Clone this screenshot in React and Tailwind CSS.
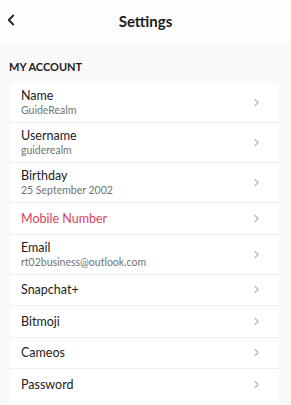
import React from 'react';
import { ChevronLeft, ChevronRight } from 'lucide-react';

const rows = [
  { label: 'Name', sub: 'GuideRealm' },
  { label: 'Username', sub: 'guiderealm' },
  { label: 'Birthday', sub: '25 September 2002' },
  { label: 'Mobile Number', red: true },
  { label: 'Email', sub: 'rt02business@outlook.com' },
  { label: 'Snapchat+' },
  { label: 'Bitmoji' },
  { label: 'Cameos' },
  { label: 'Password' },
];

const Row = ({ label, sub, red, last }) => (
  <div
    className={`flex items-center justify-between pl-[11px] pr-[16px] ${sub ? 'h-[40px]' : 'h-[31.5px]'} ${
      last ? '' : 'border-b border-[#efefef]'
    }`}
  >
    <div className="flex flex-col">
      <span className={`text-[12.5px] leading-[15px] ${red ? 'text-[#e0415f]' : 'text-[#1c1c1c]'}`}>{label}</span>
      {sub && <span className="text-[10.5px] leading-[14px] text-[#727272]">{sub}</span>}
    </div>
    <ChevronRight size={13} strokeWidth={2} className="text-[#b4b4b4]" />
  </div>
);

export default function App() {
  return (
    <div className="w-[291px] h-[405px] overflow-hidden bg-[#f9f9f9]" style={{ fontFamily: 'Lato, "Noto Sans", sans-serif' }}>
      {/* header */}
      <div className="relative h-[42px] flex items-center justify-center bg-[#fdfdfd]">
        <ChevronLeft size={18} strokeWidth={2.4} className="absolute left-[2px] top-[11px] text-[#222]" />
        <span className="text-[15px] font-bold text-[#1c1c1c]">Settings</span>
      </div>

      <div className="pl-[9px] pt-[18px] pb-[9px] text-[11px] font-bold text-[#1c1c1c] leading-[14px]">MY ACCOUNT</div>

      <div className="mx-[10px] mr-[12px] bg-white rounded-t-[4px]">
        {rows.map((r, i) => (
          <Row key={r.label} {...r} last={i === rows.length - 1} />
        ))}
      </div>
    </div>
  );
}
